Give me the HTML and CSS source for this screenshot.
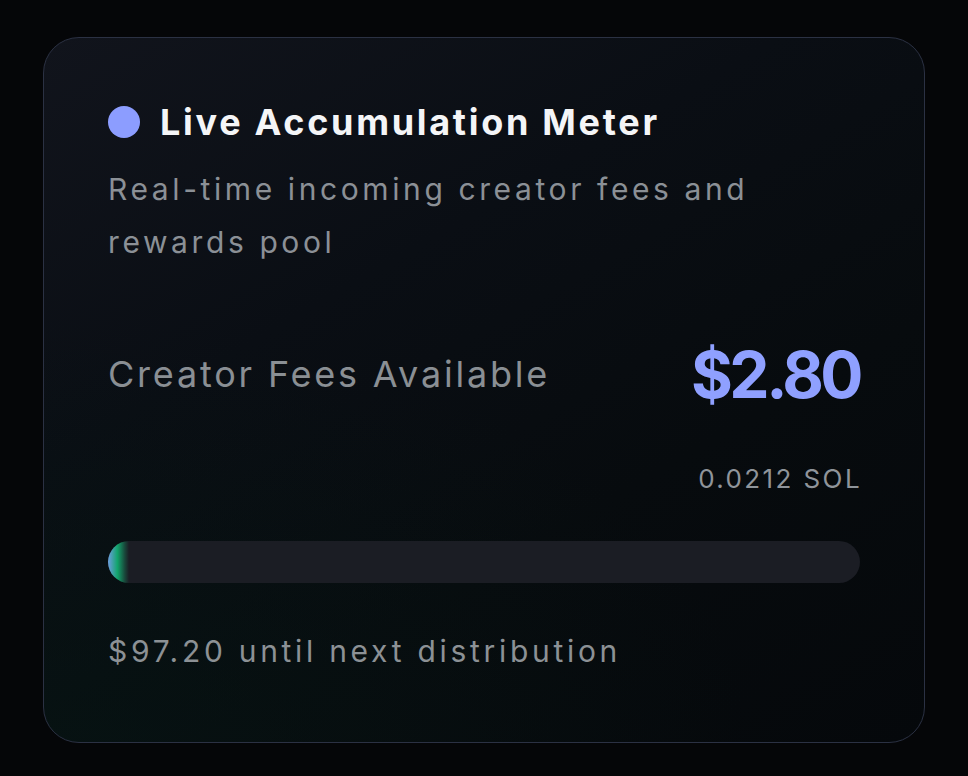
FILE: index.html
```html
<!DOCTYPE html>
<html>
<head>
<meta charset="utf-8">
<link rel="stylesheet" href="styles.css">
</head>
<body>
<div class="card">
  <div class="title-row">
    <span class="dot"></span>
    <h2 class="title">Live Accumulation Meter</h2>
  </div>
  <p class="subtitle">Real-time incoming creator fees and<br>rewards pool</p>
  <div class="fee-row">
    <span class="fee-label">Creator Fees Available</span>
    <span class="fee-value">$2.80</span>
  </div>
  <div class="sol">0.0212 SOL</div>
  <div class="track"><div class="fill" style="width: 2.8%"></div></div>
  <div class="footer">$97.20 until next distribution</div>
</div>
</body>
</html>
```

FILE: styles.css
```css
html, body {
  margin: 0;
  padding: 0;
  background: #050608;
}
body {
  padding: 37px 43px;
  font-family: "Inter", "DejaVu Sans", sans-serif;
}
.card {
  box-sizing: border-box;
  width: 882px;
  height: 706px;
  border: 1.5px solid #2b3143;
  border-radius: 36px;
  padding: 60px 64px 0 64px;
  background:
    radial-gradient(ellipse 80% 60% at 0% 100%, rgba(6, 22, 20, 0.6), rgba(6, 22, 20, 0) 100%),
    linear-gradient(150deg, #11141c 0%, #0a0e14 35%, #070b0e 65%, #05080b 100%);
  display: flex;
  flex-direction: column;
}
.title-row {
  display: flex;
  align-items: center;
  gap: 20px;
  height: 48px;
}
.dot {
  width: 32px;
  height: 32px;
  border-radius: 50%;
  background: #8c9dff;
  flex: none;
}
.title {
  margin: 0;
  font-size: 36px;
  font-weight: 700;
  color: #f4f5f7;
  letter-spacing: 2.7px;
}
.subtitle {
  margin: 17px 0 0 0;
  font-size: 30px;
  line-height: 53px;
  color: #8b9096;
  letter-spacing: 3.6px;
  white-space: nowrap;
}
.fee-row {
  margin-top: 65px;
  height: 80px;
  display: flex;
  align-items: center;
  justify-content: space-between;
}
.fee-label {
  font-size: 36px;
  color: #8a8f94;
  letter-spacing: 2.8px;
}
.fee-value {
  font-size: 64px;
  font-weight: 700;
  color: #8fa0ff;
  letter-spacing: -3.5px;
}
.sol {
  margin-top: 47px;
  text-align: right;
  font-size: 26px;
  line-height: 36px;
  color: #8f949a;
  letter-spacing: 2.4px;
  margin-right: -2px;
}
.track {
  margin-top: 44px;
  height: 42px;
  border-radius: 21px;
  background: #1b1d24;
  overflow: hidden;
}
.fill {
  height: 100%;
  background: linear-gradient(90deg, #6d9ee0 0%, #12a56c 45%, rgba(20, 150, 100, 0.35) 80%, rgba(27, 29, 36, 0) 100%);
}
.footer {
  margin-top: 46px;
  font-size: 30px;
  line-height: 44px;
  color: #8c9195;
  letter-spacing: 3.7px;
}
```
